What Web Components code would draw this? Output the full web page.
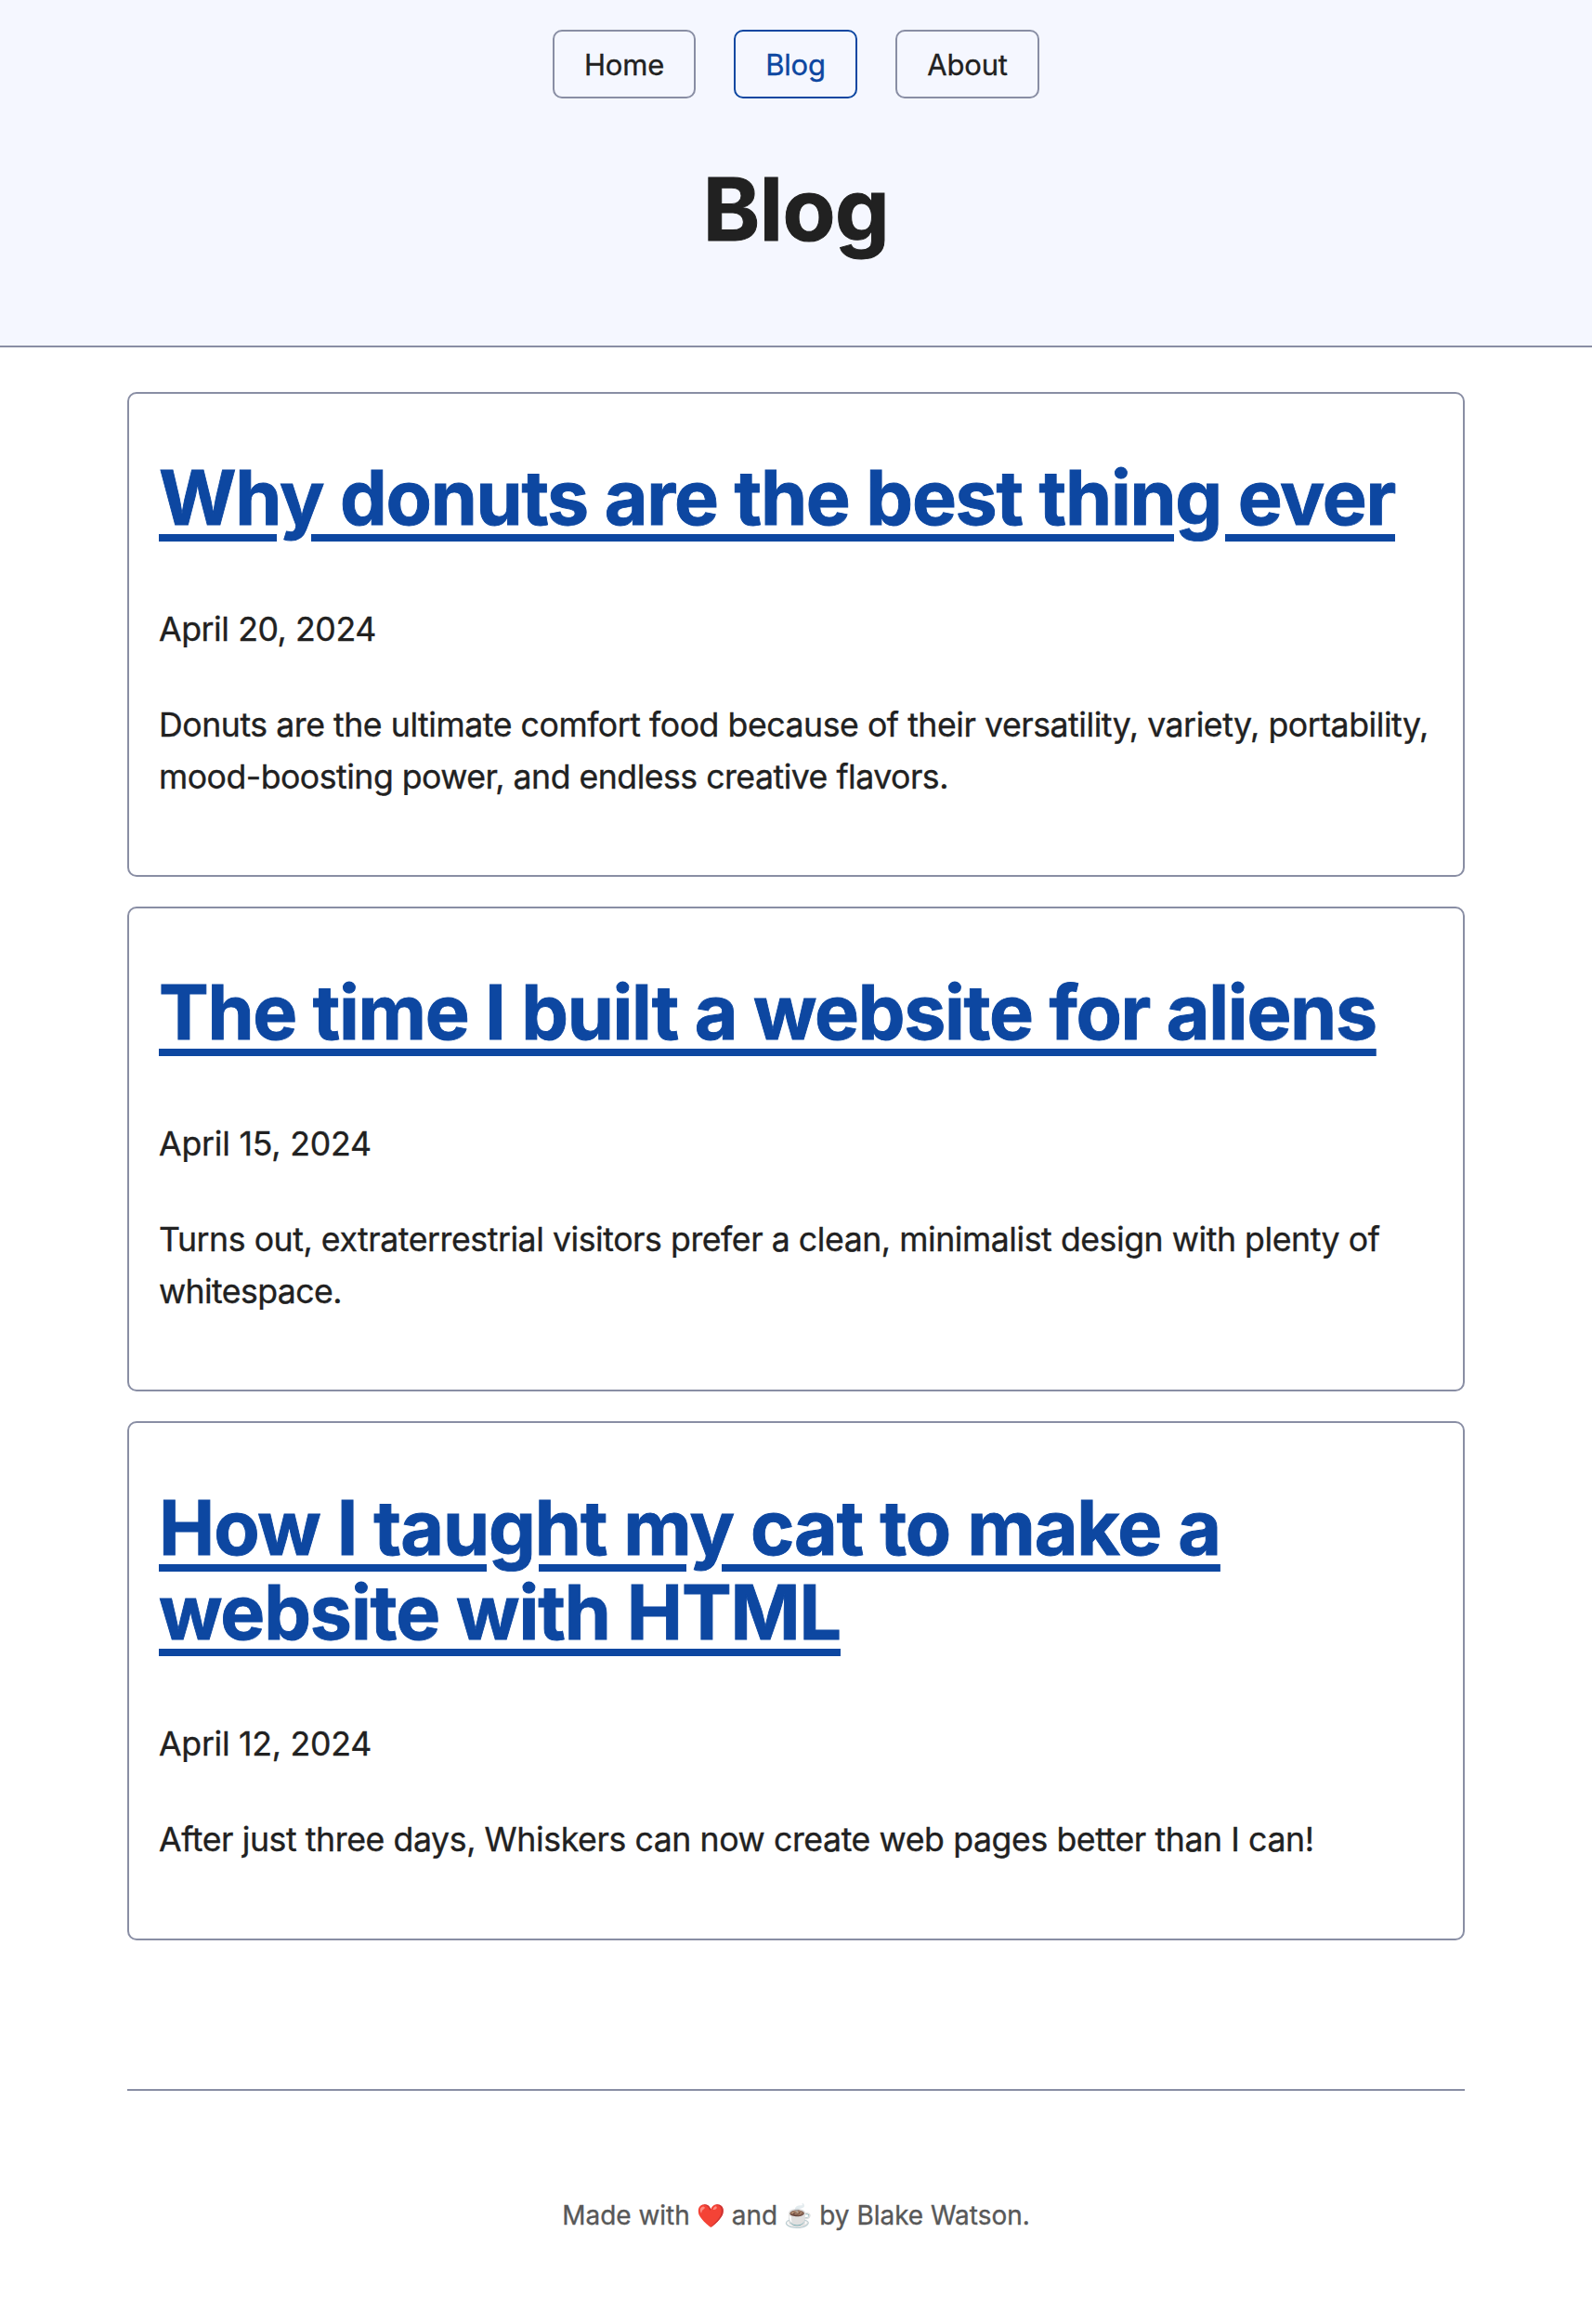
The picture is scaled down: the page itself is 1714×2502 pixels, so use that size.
<!DOCTYPE html>
<html lang="en">
<head>
<meta charset="utf-8">
<title>Blog</title>
<style>
:root {
  --bg: #fff;
  --accent-bg: #f5f7ff;
  --text: #212121;
  --text-light: #585858;
  --border: #898ea4;
  --accent: #0d47a1;
}
html { background: var(--bg); }
body {
  margin: 0;
  color: var(--text);
  font-family: Inter, "Liberation Sans", sans-serif;
  font-size: 35.66px;
  line-height: 55.2px;
  -webkit-text-stroke: .35px;
}
</style>
</head>
<body>
<blog-page>
  <site-header slot="header" heading="Blog">
    <nav-link href="#home" style="--w:154px">Home</nav-link>
    <nav-link href="#blog" current style="--w:133px">Blog</nav-link>
    <nav-link href="#about" style="--w:155px">About</nav-link>
  </site-header>

  <post-card href="#donuts">
    <text-line slot="title" style="--ls:-1.27px">Why donuts are the best thing ever</text-line>
    <text-line slot="date" style="--ls:-.43px">April 20, 2024</text-line>
    <text-line style="--ls:-.46px">Donuts are the ultimate comfort food because of their versatility, variety, portability,</text-line>
    <text-line style="--ls:-.51px">mood-boosting power, and endless creative flavors.</text-line>
  </post-card>

  <post-card href="#aliens">
    <text-line slot="title" style="--ls:-1.32px">The time I built a website for aliens</text-line>
    <text-line slot="date" style="--ls:-.2px">April 15, 2024</text-line>
    <text-line style="--ls:-.45px">Turns out, extraterrestrial visitors prefer a clean, minimalist design with plenty of</text-line>
    <text-line style="--ls:-.6px">whitespace.</text-line>
  </post-card>

  <post-card href="#cat" style="--h:559px;--lead:34.5px">
    <text-line slot="title" style="--ls:-1.08px">How I taught my cat to make a</text-line>
    <text-line slot="title" style="--ls:-1.12px">website with HTML</text-line>
    <text-line slot="date" style="--ls:-.27px">April 12, 2024</text-line>
    <text-line style="--ls:-.41px">After just three days, Whiskers can now create web pages better than I can!</text-line>
  </post-card>

  <site-footer slot="footer">Made with <emoji-glyph>❤️</emoji-glyph> and <emoji-glyph>☕</emoji-glyph> by Blake Watson.</site-footer>
</blog-page>

<script>
const define = (name, html, setup) => {
  const template = document.createElement('template');
  template.innerHTML = html;
  customElements.define(name, class extends HTMLElement {
    connectedCallback() {
      if (this.shadowRoot) return;
      const root = this.attachShadow({ mode: 'open' });
      root.append(template.content.cloneNode(true));
      if (setup) setup(this, root);
    }
  });
};

define('blog-page', `
  <style>
    :host { display: flex; flex-direction: column; }
    main { display: flex; flex-direction: column; gap: 32px; width: 1440px; margin: 48px auto 0; }
  </style>
  <slot name="header"></slot>
  <main><slot></slot></main>
  <slot name="footer"></slot>`);

define('site-header', `
  <style>
    :host { display: block; box-sizing: border-box; height: 374px; padding-top: 32px;
      background: var(--accent-bg); border-bottom: 2px solid var(--border); }
    nav { display: flex; justify-content: center; gap: 41px; }
    h1 { margin: 67.2px 0 0; text-align: center; font-size: 93px; line-height: 105.6px;
      font-weight: 700; letter-spacing: -.5px; -webkit-text-stroke: 1px; }
  </style>
  <nav><slot></slot></nav>
  <h1></h1>`, (host, root) => {
    root.querySelector('h1').textContent = host.getAttribute('heading');
  });

define('nav-link', `
  <style>
    :host { display: block; width: var(--w); }
    a { display: block; box-sizing: border-box; height: 74px; padding-top: 1px;
      border: 2px solid var(--border); border-radius: 10px; text-align: center;
      text-decoration: none; color: var(--text); font-size: 31px; line-height: 69px;
      letter-spacing: -.2px; }
    :host([current]) a { color: var(--accent); border-color: var(--accent); }
  </style>
  <a><slot></slot></a>`, (host, root) => {
    root.querySelector('a').href = host.getAttribute('href');
  });

define('text-line', `
  <style>
    :host { display: block; white-space: nowrap; letter-spacing: var(--ls, 0); }
  </style>
  <slot></slot>`);

define('post-card', `
  <style>
    :host { display: block; }
    article { box-sizing: border-box; height: var(--h, 522px); padding: 32px;
      border: 2px solid var(--border); border-radius: 10px; }
    h2 { margin: var(--lead, 34px) 0 68.2px; font-size: 80.6px; line-height: 91.5px; font-weight: 700;
      -webkit-text-stroke: .9px; }
    a { display: flex; flex-direction: column; align-items: flex-start; color: var(--accent); text-decoration: none; }
    ::slotted([slot="title"]) { text-decoration: underline 8px; text-underline-offset: 10px; }
    p { margin: 0 0 48.5px; }
  </style>
  <article>
    <h2><a><slot name="title"></slot></a></h2>
    <p><slot name="date"></slot></p>
    <p><slot></slot></p>
  </article>`, (host, root) => {
    root.querySelector('a').href = host.getAttribute('href');
  });

define('emoji-glyph', `
  <style>
    :host { display: inline-flex; justify-content: center; width: 29.4px; font-size: 24.5px;
      line-height: 24px; vertical-align: 1px; -webkit-text-stroke: 0; }
  </style>
  <slot></slot>`);

define('site-footer', `
  <style>
    :host { display: block; box-sizing: border-box; width: 1440px; margin: 160px auto 0;
      padding: 113.3px 0 60px; border-top: 2px solid var(--border); text-align: center;
      color: var(--text-light); font-size: 27.95px; line-height: 43.2px; }
  </style>
  <slot></slot>`);
</script>
</body>
</html>
